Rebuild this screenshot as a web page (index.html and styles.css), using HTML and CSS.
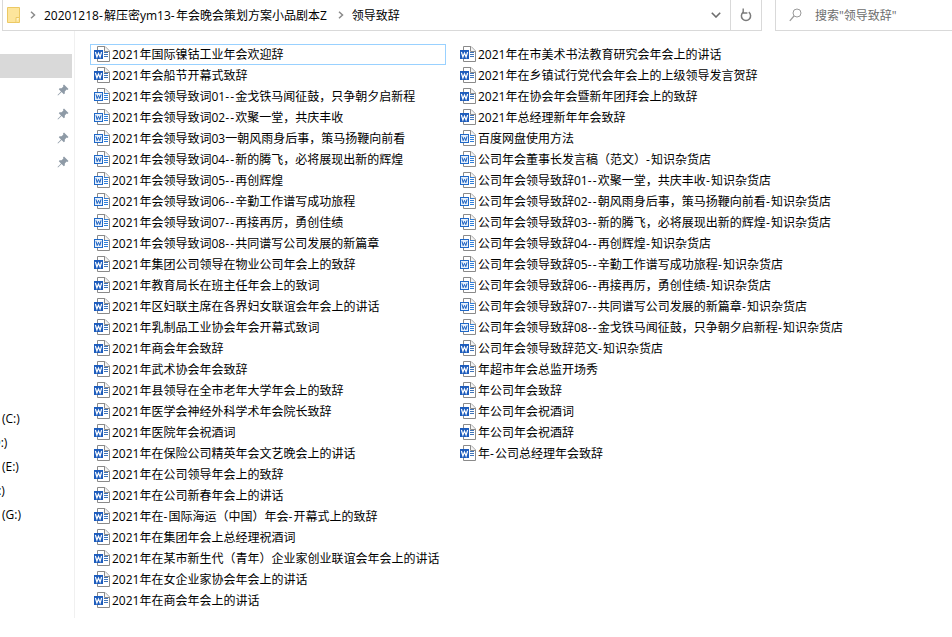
FILE: index.html
```html
<!DOCTYPE html>
<html lang="zh-CN">
<head>
<meta charset="utf-8">
<title>领导致辞</title>
<link rel="stylesheet" href="styles.css">
</head>
<body>
<svg class="defs" width="0" height="0" aria-hidden="true">
  <symbol id="word" viewBox="0 0 16 16">
    <path d="M3.5 .5H11L15.5 5V15.5H3.5Z" fill="#fff" stroke="#8a8a8a"/>
    <path d="M10.5 .5V5.5H15.5" fill="#f4f4f4" stroke="#8a8a8a"/>
    <path d="M10 6.5H14M10 8.5H14M10 10.5H14" stroke="#3f74b8"/>
    <rect x="0" y="4" width="9" height="9" fill="#1d5cbc"/>
    <path d="M1.4 6 2.9 11 4.5 7 6.1 11 7.6 6" fill="none" stroke="#fff" stroke-width="1.2"/>
  </symbol>
  <symbol id="word-line" viewBox="0 0 16 16">
    <path d="M3.5 .5H11L15.5 5V15.5H3.5Z" fill="#fff" stroke="#8a8a8a"/>
    <path d="M10.5 .5V5.5H15.5" fill="#f4f4f4" stroke="#8a8a8a"/>
    <path d="M10 5.5H14M10 7.5H14M10 9.5H14M10 11.5H14" stroke="#2f7ed8"/>
    <rect x=".5" y="4.5" width="8" height="8" fill="#e6f0fb" stroke="#1f68c7"/>
    <path d="M2 6.4 3.2 10.6 4.5 7.4 5.8 10.6 7 6.4" fill="none" stroke="#1a5fc0"/>
  </symbol>
  <symbol id="pin" viewBox="0 0 12 12">
    <path d="M7 0.5 11.5 5 10.4 6 9.6 5.6 7.8 7.4 7.8 9.4 6.8 10.2 4.6 8 1 11.5 0.5 11 4 7.4 1.8 5.2 2.6 4.2 4.6 4.2 6.4 2.4 6 1.6Z" fill="#8e9aa6"/>
  </symbol>
</svg>

<header class="toolbar">
  <div class="address">
    <svg class="folder" width="13" height="16" viewBox="0 0 13 16"><path d="M.5 .5H12.5V15.5H.5Z" fill="#fde59c" stroke="#ecc964"/><path d="M9 15.5V10.5H12.5" fill="#fff3c8" stroke="#ecc964"/></svg>
    <svg class="chev" width="6" height="8" viewBox="0 0 6 8"><path d="M1 .8 4.5 4 1 7.2" fill="none" stroke="#8a8a8a" stroke-width="1.5"/></svg>
    <span class="crumb">20201218<span class="dash">-</span>解压密ym13<span class="dash">-</span>年会晚会策划方案小品剧本Z</span>
    <svg class="chev" width="6" height="8" viewBox="0 0 6 8"><path d="M1 .8 4.5 4 1 7.2" fill="none" stroke="#8a8a8a" stroke-width="1.5"/></svg>
    <span class="crumb">领导致辞</span>
    <span class="spacer"></span>
    <svg class="drop" width="10" height="6" viewBox="0 0 10 6"><path d="M.8 .8 5 5 9.2 .8" fill="none" stroke="#6d6d6d" stroke-width="1.6"/></svg>
    <span class="refresh">
      <svg width="12" height="14" viewBox="0 0 12 14"><path d="M8.8 4.2A4.6 4.6 0 1 1 3.2 4.2" fill="none" stroke="#7b7b7b" stroke-width="1.5"/><path d="M3.2 .6V5H7.4" fill="none" stroke="#7b7b7b" stroke-width="1.4"/></svg>
    </span>
  </div>
  <div class="search">
    <svg width="13" height="14" viewBox="0 0 13 14"><circle cx="8" cy="5" r="4" fill="none" stroke="#9a9a9a"/><path d="M5 8 .8 12.8" stroke="#9a9a9a" stroke-width="1.2"/></svg>
    <span class="hint">搜索"领导致辞"</span>
  </div>
</header>

<main class="body">
  <nav class="side">
    <div class="side-row selected"></div>
    <div class="side-row pin"><svg width="12" height="12"><use href="#pin"/></svg></div>
    <div class="side-row pin"><svg width="12" height="12"><use href="#pin"/></svg></div>
    <div class="side-row pin"><svg width="12" height="12"><use href="#pin"/></svg></div>
    <div class="side-row pin"><svg width="12" height="12"><use href="#pin"/></svg></div>
    <div class="drives">
      <div class="side-row drive">(C:)</div>
      <div class="side-row drive clip">D:)</div>
      <div class="side-row drive">(E:)</div>
      <div class="side-row drive clip">F:)</div>
      <div class="side-row drive">(G:)</div>
    </div>
  </nav>
  <ul class="files">
    <li class="file focus"><svg class="doc"><use href="#word"/></svg>2021年国际镍钴工业年会欢迎辞</li>
    <li class="file"><svg class="doc"><use href="#word"/></svg>2021年会船节开幕式致辞</li>
    <li class="file"><svg class="doc"><use href="#word-line"/></svg>2021年会领导致词01<span class="dash">--</span>金戈铁马闻征鼓，只争朝夕启新程</li>
    <li class="file"><svg class="doc"><use href="#word-line"/></svg>2021年会领导致词02<span class="dash">--</span>欢聚一堂，共庆丰收</li>
    <li class="file"><svg class="doc"><use href="#word-line"/></svg>2021年会领导致词03一朝风雨身后事，策马扬鞭向前看</li>
    <li class="file"><svg class="doc"><use href="#word-line"/></svg>2021年会领导致词04<span class="dash">--</span>新的腾飞，必将展现出新的辉煌</li>
    <li class="file"><svg class="doc"><use href="#word-line"/></svg>2021年会领导致词05<span class="dash">--</span>再创辉煌</li>
    <li class="file"><svg class="doc"><use href="#word-line"/></svg>2021年会领导致词06<span class="dash">--</span>辛勤工作谱写成功旅程</li>
    <li class="file"><svg class="doc"><use href="#word-line"/></svg>2021年会领导致词07<span class="dash">--</span>再接再厉，勇创佳绩</li>
    <li class="file"><svg class="doc"><use href="#word-line"/></svg>2021年会领导致词08<span class="dash">--</span>共同谱写公司发展的新篇章</li>
    <li class="file"><svg class="doc"><use href="#word"/></svg>2021年集团公司领导在物业公司年会上的致辞</li>
    <li class="file"><svg class="doc"><use href="#word"/></svg>2021年教育局长在班主任年会上的致词</li>
    <li class="file"><svg class="doc"><use href="#word"/></svg>2021年区妇联主席在各界妇女联谊会年会上的讲话</li>
    <li class="file"><svg class="doc"><use href="#word"/></svg>2021年乳制品工业协会年会开幕式致词</li>
    <li class="file"><svg class="doc"><use href="#word"/></svg>2021年商会年会致辞</li>
    <li class="file"><svg class="doc"><use href="#word"/></svg>2021年武术协会年会致辞</li>
    <li class="file"><svg class="doc"><use href="#word"/></svg>2021年县领导在全市老年大学年会上的致辞</li>
    <li class="file"><svg class="doc"><use href="#word"/></svg>2021年医学会神经外科学术年会院长致辞</li>
    <li class="file"><svg class="doc"><use href="#word"/></svg>2021年医院年会祝酒词</li>
    <li class="file"><svg class="doc"><use href="#word"/></svg>2021年在保险公司精英年会文艺晚会上的讲话</li>
    <li class="file"><svg class="doc"><use href="#word"/></svg>2021年在公司领导年会上的致辞</li>
    <li class="file"><svg class="doc"><use href="#word"/></svg>2021年在公司新春年会上的讲话</li>
    <li class="file"><svg class="doc"><use href="#word"/></svg>2021年在<span class="dash">-</span>国际海运（中国）年会<span class="dash">-</span>开幕式上的致辞</li>
    <li class="file"><svg class="doc"><use href="#word"/></svg>2021年在集团年会上总经理祝酒词</li>
    <li class="file"><svg class="doc"><use href="#word"/></svg>2021年在某市新生代（青年）企业家创业联谊会年会上的讲话</li>
    <li class="file"><svg class="doc"><use href="#word"/></svg>2021年在女企业家协会年会上的讲话</li>
    <li class="file"><svg class="doc"><use href="#word"/></svg>2021年在商会年会上的讲话</li>
    <li class="file"><svg class="doc"><use href="#word"/></svg>2021年在市美术书法教育研究会年会上的讲话</li>
    <li class="file"><svg class="doc"><use href="#word"/></svg>2021年在乡镇试行党代会年会上的上级领导发言贺辞</li>
    <li class="file"><svg class="doc"><use href="#word"/></svg>2021年在协会年会暨新年团拜会上的致辞</li>
    <li class="file"><svg class="doc"><use href="#word"/></svg>2021年总经理新年年会致辞</li>
    <li class="file"><svg class="doc"><use href="#word-line"/></svg>百度网盘使用方法</li>
    <li class="file"><svg class="doc"><use href="#word-line"/></svg>公司年会董事长发言稿（范文）<span class="dash">-</span>知识杂货店</li>
    <li class="file"><svg class="doc"><use href="#word-line"/></svg>公司年会领导致辞01<span class="dash">--</span>欢聚一堂，共庆丰收<span class="dash">-</span>知识杂货店</li>
    <li class="file"><svg class="doc"><use href="#word-line"/></svg>公司年会领导致辞02<span class="dash">--</span>朝风雨身后事，策马扬鞭向前看<span class="dash">-</span>知识杂货店</li>
    <li class="file"><svg class="doc"><use href="#word-line"/></svg>公司年会领导致辞03<span class="dash">--</span>新的腾飞，必将展现出新的辉煌<span class="dash">-</span>知识杂货店</li>
    <li class="file"><svg class="doc"><use href="#word-line"/></svg>公司年会领导致辞04<span class="dash">--</span>再创辉煌<span class="dash">-</span>知识杂货店</li>
    <li class="file"><svg class="doc"><use href="#word-line"/></svg>公司年会领导致辞05<span class="dash">--</span>辛勤工作谱写成功旅程<span class="dash">-</span>知识杂货店</li>
    <li class="file"><svg class="doc"><use href="#word-line"/></svg>公司年会领导致辞06<span class="dash">--</span>再接再厉，勇创佳绩<span class="dash">-</span>知识杂货店</li>
    <li class="file"><svg class="doc"><use href="#word-line"/></svg>公司年会领导致辞07<span class="dash">--</span>共同谱写公司发展的新篇章<span class="dash">-</span>知识杂货店</li>
    <li class="file"><svg class="doc"><use href="#word-line"/></svg>公司年会领导致辞08<span class="dash">--</span>金戈铁马闻征鼓，只争朝夕启新程<span class="dash">-</span>知识杂货店</li>
    <li class="file"><svg class="doc"><use href="#word"/></svg>公司年会领导致辞范文<span class="dash">-</span>知识杂货店</li>
    <li class="file"><svg class="doc"><use href="#word"/></svg>年超市年会总监开场秀</li>
    <li class="file"><svg class="doc"><use href="#word"/></svg>年公司年会致辞</li>
    <li class="file"><svg class="doc"><use href="#word"/></svg>年公司年会祝酒词</li>
    <li class="file"><svg class="doc"><use href="#word"/></svg>年公司年会祝酒辞</li>
    <li class="file"><svg class="doc"><use href="#word"/></svg>年<span class="dash">-</span>公司总经理年会致辞</li>
  </ul>
</main>
</body>
</html>
```
FILE: styles.css
```css
* { box-sizing: border-box; }
html, body { margin: 0; height: 100%; overflow: hidden; background: #fff; }
body { font: 12px/21px "Open Sans", "Noto Sans CJK SC", sans-serif; color: #000; }
.defs { position: absolute; }
.dash { letter-spacing: 1.2px; }

.toolbar { display: flex; height: 31px; padding-left: 2px; }
.address {
  width: 760px; display: flex; align-items: center;
  border: 1px solid #d9d9d9; border-top: 0; padding-left: 4px;
}
.folder { margin-right: 10px; }
.chev { margin-right: 8px; }
.crumb { margin-right: 11px; }
.spacer { flex: 1; }
.drop { margin-right: 9px; }
.refresh {
  width: 31px; height: 100%; display: flex; align-items: center; justify-content: center;
  border-left: 1px solid #d9d9d9;
}
.search {
  margin-left: 13px; flex: 1; display: flex; align-items: center; gap: 13px;
  border: 1px solid #d9d9d9; border-top: 0; border-right: 0; padding-left: 13px;
}
.hint { color: #6d6d6d; }

.body { display: flex; height: 587px; }
.side { width: 75px; overflow: hidden; border-right: 1px solid #f0f0f0; padding-top: 23px; }
.side-row { height: 24px; display: flex; align-items: center; }
.selected { width: 72px; background: #d9d9d9; }
.pin { padding-left: 57px; }
.drives { margin-top: 232px; }
.drive { padding-left: 2px; }
.clip { padding-left: 0; margin-left: -8px; }

.files {
  margin: 0; padding: 13px 0 0 15px; list-style: none;
  display: grid; grid-auto-flow: column;
  grid-template-rows: repeat(27, 21px); grid-template-columns: 366px 366px;
}
.file { display: flex; align-items: flex-start; white-space: pre; padding-left: 4px; height: 21px; width: 356px; }
.focus { border: 1px solid #99d1ff; padding-left: 3px; line-height: 19px; }
.doc { width: 16px; height: 16px; margin: 2px 2px 0 0; flex: none; }
.focus .doc { margin-top: 1px; }
```
